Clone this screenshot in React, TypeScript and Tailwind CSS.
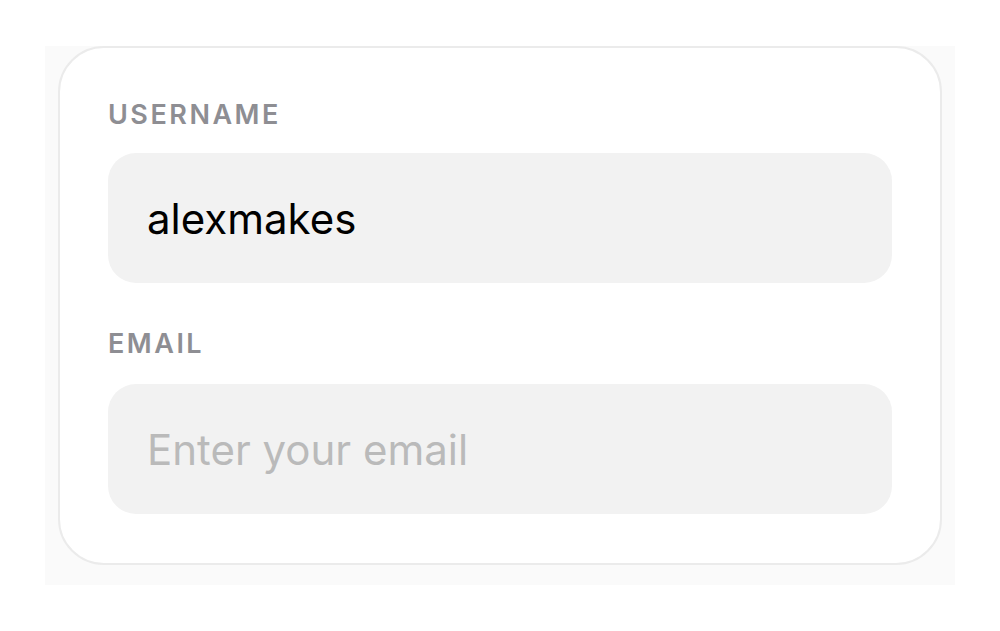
import { useState } from 'react';

export default function App() {
  const [username, setUsername] = useState('alexmakes');
  const [email, setEmail] = useState('');

  return (
    <div className="min-h-[631px] bg-white pt-[46px] font-['Inter',sans-serif]">
      <div className="ml-[45px] w-[910px] h-[539px] bg-[#fafafa]">
        <div className="ml-[13px] w-[884px] h-[519px] bg-white border-2 border-[#ebebeb] rounded-[46px] px-[48px] pt-[49px]">
          <label className="block text-[27px] font-semibold tracking-[2.5px] text-[#8e8e93] leading-[36px]">
            USERNAME
          </label>
          <input
            value={username}
            onChange={(e) => setUsername(e.target.value)}
            className="mt-[20px] w-full h-[130px] rounded-[28px] bg-[#f2f2f2] pl-[39px] text-[42px] text-black outline-none"
          />
          <label className="block mt-[43px] text-[27px] font-semibold tracking-[2.5px] text-[#8e8e93] leading-[36px]">
            EMAIL
          </label>
          <input
            value={email}
            onChange={(e) => setEmail(e.target.value)}
            placeholder="Enter your email"
            className="mt-[22px] w-full h-[130px] rounded-[28px] bg-[#f2f2f2] pl-[39px] text-[42px] text-black placeholder:text-[#bababa] outline-none"
          />
        </div>
      </div>
    </div>
  );
}
